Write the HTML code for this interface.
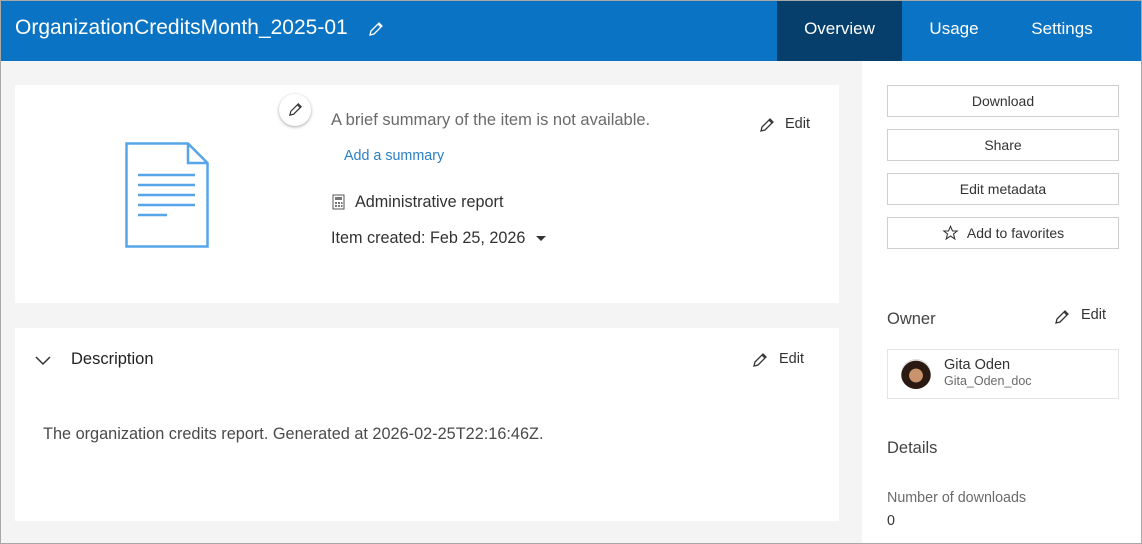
<!DOCTYPE html>
<html><head><style>
*{box-sizing:border-box;margin:0;padding:0}
body{width:1142px;height:544px;overflow:hidden;font-family:"Liberation Sans",sans-serif;color:#323232;background:#f4f4f4;position:relative}
.frame{position:absolute;inset:0;border:1px solid #a8a8a8;pointer-events:none}
.hdr{position:absolute;left:0;top:0;width:1142px;height:61px;background:#0b73c3}
.title{position:absolute;left:15px;top:16px;color:#fff;font-size:21px}
.tab{position:absolute;top:0;height:61px;line-height:58px;color:#fff;font-size:17px;text-align:center}
.card{position:absolute;background:#fff}
.btn{position:absolute;left:887px;width:232px;height:32px;border:1px solid #cfcfcf;background:#fff;text-align:center;line-height:30px;font-size:14px;color:#333}
.side{position:absolute;left:862px;top:61px;width:280px;height:483px;background:#fff}
</style></head><body>
<div class="hdr">
<div class="title">OrganizationCreditsMonth_2025-01</div>
<svg style="position:absolute;left:368px;top:21px" width="16" height="16" viewBox="0 0 16 16"><path d="M2 14l1-4 8-8 3 3-8 8z M10 3l3 3" fill="none" stroke="#fff" stroke-width="1.3"/></svg>
<div class="tab" style="left:777px;width:125px;background:#063f6c">Overview</div>
<div class="tab" style="left:902px;width:104px">Usage</div>
<div class="tab" style="left:1006px;width:112px">Settings</div>
</div>
<div class="side"></div>
<div class="card" style="left:15px;top:85px;width:824px;height:218px">
<svg style="position:absolute;left:110px;top:57px" width="84" height="106" viewBox="0 0 84 106"><path d="M1.5 1.5H63L82.5 21V104.5H1.5Z M63 1.5V21H82.5" fill="none" stroke="#56a5e8" stroke-width="2.5"/><g stroke="#56a5e8" stroke-width="2.5"><line x1="13" y1="33" x2="70" y2="33"/><line x1="13" y1="43" x2="70" y2="43"/><line x1="13" y1="53" x2="70" y2="53"/><line x1="13" y1="63" x2="70" y2="63"/><line x1="13" y1="73" x2="42" y2="73"/></g></svg>
<div style="position:absolute;left:264px;top:9px;width:32px;height:32px;border-radius:50%;background:#fff;box-shadow:0 1px 3px rgba(0,0,0,.35)"></div>
<svg style="position:absolute;left:273px;top:17px" width="15" height="15" viewBox="0 0 16 16"><path d="M2 14l1-4 8-8 3 3-8 8z M10 3l3 3" fill="none" stroke="#333" stroke-width="1.3"/></svg>
<div style="position:absolute;left:316px;top:26px;font-size:16.5px;color:#6a6a6a">A brief summary of the item is not available.</div>
<div style="position:absolute;left:329px;top:63px;font-size:14.3px;color:#2a7fc4">Add a summary</div>
<svg style="position:absolute;left:744px;top:32px" width="16" height="16" viewBox="0 0 16 16"><path d="M2 14l1-4 8-8 3 3-8 8z M10 3l3 3" fill="none" stroke="#333" stroke-width="1.3"/></svg>
<div style="position:absolute;left:770px;top:31px;font-size:14.5px">Edit</div>
<svg style="position:absolute;left:317px;top:109px" width="13" height="16" viewBox="0 0 13 16"><rect x="1" y="1" width="11" height="14" fill="none" stroke="#555"/><rect x="3" y="3" width="7" height="3" fill="#777"/><g fill="#777"><rect x="3" y="8" width="2" height="2"/><rect x="6" y="8" width="2" height="2"/><rect x="9" y="8" width="1.5" height="2"/><rect x="3" y="11" width="2" height="2"/><rect x="6" y="11" width="2" height="2"/><rect x="9" y="11" width="1.5" height="2"/></g></svg>
<div style="position:absolute;left:340px;top:108px;font-size:16.2px">Administrative report</div>
<div style="position:absolute;left:316px;top:144px;font-size:16.2px">Item created: Feb 25, 2026</div>
<div style="position:absolute;left:521px;top:151px;width:0;height:0;border-left:5px solid transparent;border-right:5px solid transparent;border-top:5px solid #333"></div>
</div>
<div class="card" style="left:15px;top:328px;width:824px;height:193px">
<svg style="position:absolute;left:20px;top:28px" width="16" height="10" viewBox="0 0 16 10"><path d="M1 1l7 7 7-7" fill="none" stroke="#333" stroke-width="1.5"/></svg>
<div style="position:absolute;left:56px;top:22px;font-size:16.5px;color:#222">Description</div>
<svg style="position:absolute;left:737px;top:24px" width="16" height="16" viewBox="0 0 16 16"><path d="M2 14l1-4 8-8 3 3-8 8z M10 3l3 3" fill="none" stroke="#333" stroke-width="1.3"/></svg>
<div style="position:absolute;left:764px;top:23px;font-size:14.5px">Edit</div>
<div style="position:absolute;left:28px;top:97px;font-size:16.3px;color:#4a4a4a">The organization credits report. Generated at 2026-02-25T22:16:46Z.</div>
</div>
<div class="btn" style="top:85px">Download</div>
<div class="btn" style="top:129px">Share</div>
<div class="btn" style="top:173px">Edit metadata</div>
<div class="btn" style="top:217px"><svg style="vertical-align:-3px;margin-right:8px" width="17" height="16" viewBox="0 0 24 24"><path d="M12 2l3 7h7l-5.5 4.5 2 7.5L12 16.5 5.5 21l2-7.5L2 9h7z" fill="none" stroke="#333" stroke-width="1.6"/></svg>Add to favorites</div>
<div style="position:absolute;left:887px;top:310px;font-size:16.5px;color:#444">Owner</div>
<svg style="position:absolute;left:1054px;top:309px" width="16" height="16" viewBox="0 0 16 16"><path d="M2 14l1-4 8-8 3 3-8 8z M10 3l3 3" fill="none" stroke="#333" stroke-width="1.3"/></svg>
<div style="position:absolute;left:1081px;top:307px;font-size:14.5px">Edit</div>
<div style="position:absolute;left:887px;top:349px;width:232px;height:50px;border:1px solid #e4e4e4;background:#fff">
<div style="position:absolute;left:13px;top:9px;width:30px;height:30px;border-radius:50%;background:radial-gradient(circle at 50% 55%,#c9936e 0 30%,#2a1a12 32% 65%,#ddd 67%)"></div>
<div style="position:absolute;left:56px;top:7px;font-size:14.5px;color:#333">Gita Oden</div>
<div style="position:absolute;left:56px;top:24px;font-size:12.5px;color:#6a6a6a">Gita_Oden_doc</div>
</div>
<div style="position:absolute;left:887px;top:439px;font-size:16.5px;color:#444">Details</div>
<div style="position:absolute;left:887px;top:490px;font-size:14.3px;color:#6a6a6a">Number of downloads</div>
<div style="position:absolute;left:887px;top:513px;font-size:14.3px;color:#333">0</div>
<div class="frame"></div>
</body></html>
